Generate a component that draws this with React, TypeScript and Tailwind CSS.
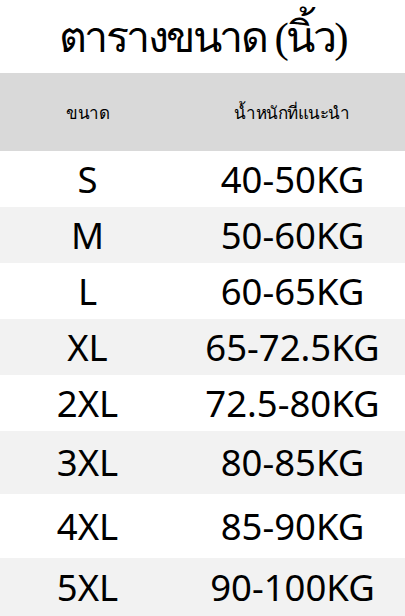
import React from 'react';

const rows = [
  { size: 'S', weight: '40-50KG', h: 'h-[56px]' },
  { size: 'M', weight: '50-60KG', h: 'h-[56px]' },
  { size: 'L', weight: '60-65KG', h: 'h-[56px]' },
  { size: 'XL', weight: '65-72.5KG', h: 'h-[56px]' },
  { size: '2XL', weight: '72.5-80KG', h: 'h-[56px]' },
  { size: '3XL', weight: '80-85KG', h: 'h-[63px]' },
  { size: '4XL', weight: '85-90KG', h: 'h-[64px]' },
  { size: '5XL', weight: '90-100KG', h: 'h-[58px]' },
];

const App = () => {
  return (
    <div className="w-[405px] h-[616px] bg-white overflow-hidden text-black">
      {/* title */}
      <div className="h-[73px] flex items-center justify-center pt-[2px] text-[43px] leading-none tracking-[-2.5px] font-['Liberation_Serif',serif]">
        ตารางขนาด (นิ้ว)
      </div>

      {/* header */}
      <div className="h-[78px] bg-[#d9d9d9] grid grid-cols-[175px_1fr] items-center pt-[4px] text-[17px] tracking-[-0.5px] font-['Liberation_Serif',serif]">
        <div className="text-center">ขนาด</div>
        <div className="text-center pl-[4px]">น้ำหนักที่แนะนำ</div>
      </div>

      {rows.map((r, i) => (
        <div
          key={r.size}
          className={`${r.h} grid grid-cols-[175px_1fr] items-center text-[36.5px] leading-none font-['Noto_Sans',sans-serif] ${
            i % 2 === 1 ? 'bg-[#f2f2f2]' : 'bg-white'
          }`}
        >
          <div className="text-center">{r.size}</div>
          <div className="text-center pl-[5px]">{r.weight}</div>
        </div>
      ))}
    </div>
  );
};

export default App;
